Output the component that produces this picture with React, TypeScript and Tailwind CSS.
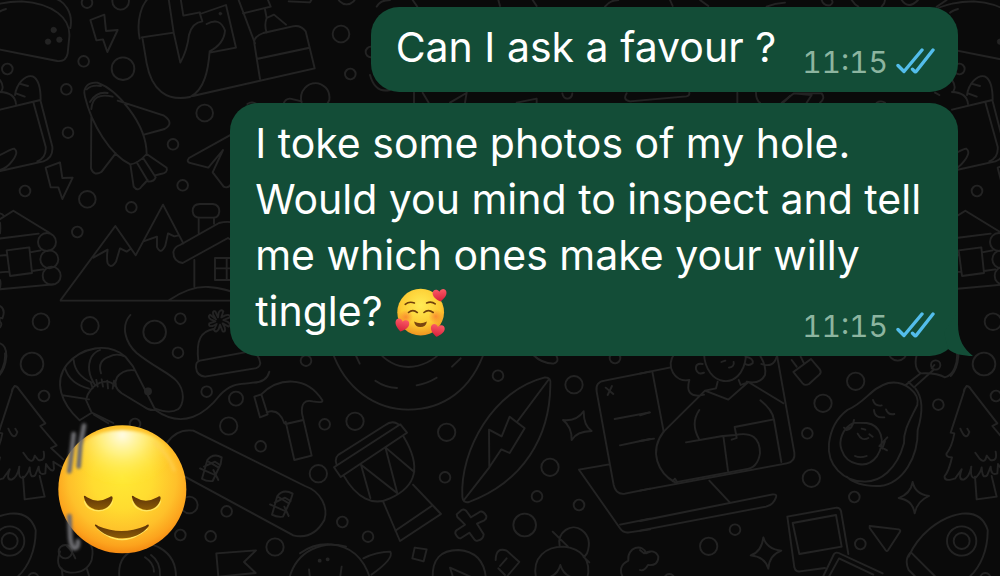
import type { ReactNode } from "react";

type Circle = [number, number, number];

const circles: Record<string, Circle[]> = {
  sky: [
    [261, 8, 16], [362, 4, 25], [22, 207, 16], [251, 184, 16], [369, 206, 34], [199, 268, 16],
    [204, 398, 16], [75, 573, 16], [262, 598, 25], [614, 339, 25], [519, 433, 16], [548, 556, 16],
    [1023, 102, 25], [1051, 222, 16], [1113, 156, 16], [1040, -15, 28],
  ],
  hills: [
    [394, 82, 16], [232, 156, 16], [123, 425, 25], [270, 437, 26], [464, 456, 34], [541, 416, 16],
    [534, 518, 16], [96, 552, 34], [141, 186, 27], [148, 238, 27], [155, 287, 27],
  ],
  forest: [
    [132, 138, 16], [620, 125, 16], [708, 146, 21], [686, 228, 26], [782, 289, 16], [974, 223, 16],
    [955, 371, 26], [680, 484, 16], [541, 555, 16], [632, 559, 16], [825, 591, 26], [568, 465, 25],
    [405, 222, 16], [918, 32, 16], [29, 573, 44], [29, 573, 24], [196, 605, 20], [100, 685, 16],
  ],
  music: [
    [165, 214, 26], [594, 77, 16], [440, 247, 26], [822, 104, 26], [435, 382, 16], [750, 352, 26],
    [711, 439, 16], [837, 465, 16], [127, 516, 16], [204, 560, 16], [674, 525, 34], [945, 24, 16],
  ],
  desk: [
    [647, 124, 26], [549, 190, 26], [502, 280, 16], [514, 415, 26], [643, 471, 16], [895, 194, 16],
    [285, 569, 16], [206, 619, 26], [661, 612, 16], [887, 75, 14], [773, 34, 28], [88, 718, 16],
  ],
};

function Dots({ set }: { set: string }) {
  return (
    <>
      {circles[set].map(([cx, cy, r], i) => (
        <circle key={i} cx={cx} cy={cy} r={r} />
      ))}
    </>
  );
}

function Doodles() {
  return (
    <g fill="none" stroke="#232323" strokeWidth="5.5" strokeLinecap="round" strokeLinejoin="round">
      <g transform="scale(.33333)">
        <Dots set="sky" />
        {/* taco */}
        <path d="M-120 130C-110 40 -30 5 65 4C160 10 212 55 208 110L203 160Q198 186 172 183L0 149L-120 130M160 -6C195 2 220 40 211 84M-6 38Q5 30 18 27" />
        <g fill="#232323" strokeWidth="2">
          <circle cx="161" cy="90" r="8" />
          <circle cx="144" cy="125" r="8" />
          <circle cx="178" cy="119" r="8" />
          <circle cx="661" cy="41" r="4" />
        </g>
        {/* bolts */}
        <path d="M271 60L313 44L318 93L353 90L322 156L309 118L289 121ZM137 503L180 487L187 534L218 533L187 597L175 562L152 562Z" />
        {/* shopping bag */}
        <path d="M0 329L121 300L157 440Q160 474 130 484L0 513M100 307L137 440Q140 472 112 484M45 285C50 250 76 224 98 229Q122 240 122 300M58 251L84 258M48 280L74 290M0 240Q13 258 5 272M0 276Q45 278 48 312M-20 469C5 470 25 447 43 446Q58 456 35 485Q20 505 0 510" />
        {/* rocket plane */}
        <path d="M255 290C246 260 268 246 292 248C350 268 440 370 440 462Q415 490 391 493C330 465 274 370 255 290M260 268Q275 253 303 258M274 327Q278 275 338 290M270 306Q289 274 323 279M353 302L490 346Q525 369 494 387L432 404M274 350L273 505Q282 530 305 515L347 460M391 493L401 560Q414 577 426 558L443 540M410 487L445 545Q462 545 467 532L430 475M440 462L500 503Q505 519 482 522L465 526" />
        {/* snake and easel */}
        <path d="M419 116C408 60 425 10 450 -10M427 112L440 190C455 270 500 305 570 291C615 270 625 205 629 154Q672 132 675 92Q660 50 620 72M425 112L521 98L505 -10M521 98L541 188Q562 150 567 105Q576 68 607 64L600 42L678 15L708 143L629 158M541 -10L550 47L600 37M578 288L944 205L917 94Q902 74 878 79L790 99Q760 110 763 130L780 237M714 -5L765 130M770 177L925 144M729 40L812 20L800 -10M795 28L800 54L822 44L858 74M800 54Q792 75 800 98M866 4L930 7L937 -5" />
        {/* paper plane */}
        <path d="M700 400L567 474Q556 487 575 490L625 503L669 450L638 517L671 560Q685 567 695 550" />
        {/* stool */}
        <path d="M905 310C895 270 925 246 955 250Q992 262 988 300L980 315M850 312Q858 290 880 298L905 304M742 312Q756 302 770 312" />
      </g>

      <g transform="translate(0 180) scale(.33333)">
        <Dots set="hills" />
        {/* log cabin */}
        <path d="M-110 188L40 92L148 158M-100 188L116 161M0 227L20 225M90 217L122 211M20 211L88 202L96 279L30 288ZM0 277L26 275M96 273L130 268M-100 337L160 313M-8 100Q5 98 12 108M0 128Q2 145 0 160M0 300Q4 315 -2 328" />
        {/* mountains */}
        <path d="M182 360L346 138L407 226L489 74L550 190M182 362L700 362M280 233L323 209Q319 235 323 250Q333 268 348 245L360 205L380 215L391 207M430 184L471 170V201Q482 226 496 197L504 160L523 169L536 166" />
        {/* cottage */}
        <path d="M583 240V320M700 184L684 174L548 249Q520 245 520 216Q523 201 540 195L657 129Q678 123 700 127M596 160V114M642 131V114M578 94Q578 72 600 72H638Q658 74 658 94Q656 114 638 113H600Q580 113 578 94M508 360Q570 318 625 321Q680 325 720 345M645 234H700M645 234V300H700M645 265H700M680 234V300" />
        {/* woolly hat */}
        <path d="M595 542C588 480 602 455 640 447M600 542L750 514Q775 515 781 550Q778 565 760 566L615 590Q590 587 588 562Q587 545 600 542" />
        <path d="M648 418L630 404Q622 410 632 418L646 424L628 430Q624 440 638 438L650 432L642 450Q648 460 656 448L660 434L668 454Q678 458 674 442L668 430L686 440Q694 434 684 426L670 420L690 412Q690 402 676 406L664 412L670 394Q662 386 656 398L654 412L646 394Q636 392 640 404Z" />
        {/* fishing line */}
        <path d="M391 405C360 440 378 490 410 519C460 560 510 580 530 603C558 635 550 675 534 688Q510 703 465 686M0 378Q18 388 7 415Q-4 410 0 425Q8 432 0 442M0 490Q20 497 19 530Q15 570 -4 588" />
      </g>

      <g transform="translate(0 350) scale(.33333)">
        <Dots set="forest" />
        {/* shrimp */}
        <path d="M239 211C183 160 160 95 201 43C245 -8 323 -25 376 20L399 49L466 180Q447 182 432 170L365 130Q337 110 351 82Q370 56 405 61M303 70Q291 32 328 20Q350 8 376 20M285 105Q255 60 275 20Q285 5 300 0M275 98Q225 75 221 30M267 116Q210 102 195 55M267 148L190 136M239 211L275 188L258 150Q265 115 300 98Q330 88 345 108M278 115L272 96M293 110L289 90M309 110L305 88M324 115L322 92M338 116L342 92M275 188L340 219M282 194L325 220M466 180C550 240 618 190 660 135C700 93 730 105 758 98Q800 97 808 65" />
        <circle cx="444" cy="124" r="9" fill="#232323" />
        {/* spruce */}
        <path d="M44 108Q36 116 35 128L-4 248L7 250Q0 290 -16 310Q-20 321 0 322Q-10 365 -22 378Q-25 397 10 385Q24 365 29 358Q17 390 35 389Q52 382 58 350Q53 390 72 382Q86 368 89 352Q91 390 106 375L116 350Q117 379 136 370L138 342Q157 372 162 356L160 335L190 354M44 108Q51 108 57 118L136 220L121 228L170 286L153 294L190 328M69 380L74 448L134 440L119 378M25 236Q42 276 52 246L46 236M70 308L82 325Q95 339 101 327L104 317L115 330Q137 335 131 305" />
        {/* hammer */}
        <path d="M763 140L784 133L803 193L780 202ZM784 133C835 82 920 76 967 151Q970 160 938 154Q902 146 906 190L935 317L883 330L857 215M857 222L910 210M853 220Q840 180 810 184L800 187" />
        {/* skateboard */}
        <path d="M500 280Q530 235 580 242L915 408C965 425 985 475 973 510Q940 570 880 556L555 380M606 386L622 330Q640 308 665 322L662 342L638 393Q620 395 606 386M600 355L645 375M612 350L645 335L660 345M622 333L655 352M640 360L655 390M816 494L832 438Q850 415 878 431L872 450L849 500Q830 502 816 494M810 463L855 483M824 458L855 443L872 453M834 440L866 460M853 470L866 498" />
        {/* rocket */}
        <path d="M-130 620C-105 560 -40 500 30 491Q90 485 107 540C108 600 85 650 55 678M-125 608Q-144 630 -130 660L-100 690M-120 610L-40 690" />
        {/* mitten, ring, flag, smile */}
        <path d="M180 604Q160 660 210 668Q260 670 275 630Q283 592 268 580M185 655L188 680M260 655L268 680M200 588Q215 600 226 625M358 684Q352 620 400 602M380 592C450 560 530 600 528 684M453 615Q482 635 480 678M435 622Q462 640 462 665M649 610L768 601L732 636L767 669L655 680ZM868 684C890 600 970 570 1038 590" />
      </g>

      <g transform="translate(300 350) scale(.33333)">
        <Dots set="music" />
        {/* record */}
        <path d="M95 0C135 120 230 178 325 179C430 178 515 120 555 0M230 0Q270 50 325 51Q385 49 430 0M160 0L179 41M226 92Q255 112 291 114M350 106Q382 100 410 83M456 50L482 25M700 15Q725 40 760 41Q785 34 760 5" />
        {/* drum */}
        <path d="M102 352L301 223L321 248L122 381ZM110 345Q100 320 125 308L255 226Q276 210 294 222M131 377C170 445 220 470 270 445C350 410 365 350 311 260M211 444L183 344L292 430L256 292L343 366M250 456L300 573L423 492L339 404M286 542L398 466" />
        {/* surfboard */}
        <path d="M487 440C480 300 580 120 735 82Q755 82 751 105C750 260 670 395 507 456Q488 460 487 440M492 450L568 352L567 239L605 259L629 200L674 235L629 309L604 298L568 352M651 216L745 90" />
        {/* stars, cross, diamond */}
        <path d="M789 210Q830 215 851 184Q851 228 875 243Q830 244 815 270Q816 231 789 210M470 493L485 480Q492 476 499 483L513 502L540 485Q550 482 559 498Q560 506 553 511L531 521L551 553Q550 568 533 572Q527 574 522 567L508 548L482 565Q473 566 466 551Q465 543 472 539L495 524L472 501ZM344 593L380 598L371 634L337 625Z" />
        {/* monster and badge */}
        <path d="M0 610Q40 580 92 583Q180 590 210 684M190 625Q230 605 271 605Q283 625 214 674M27 658L30 684M125 650L120 684M398 684Q395 600 475 600Q550 605 558 684M450 653L511 680M450 653L460 684M587 630Q588 590 620 602L658 636L617 684M600 648L620 625M595 655L615 675M708 684C695 620 740 590 790 590C845 595 875 630 862 684M758 545L804 590M779 588C770 545 815 518 845 540Q878 565 861 610L854 619M850 620L868 637M752 680Q775 670 781 645Q788 670 810 680M970 684Q950 650 985 632C980 590 1030 580 1038 610L1050 605" />
        <circle cx="59" cy="632" r="3" />
        <circle cx="83" cy="628" r="3" />
        {/* laptop screen */}
        <path d="M1050 65L914 92Q885 96 890 125L941 405Q948 435 975 431L1050 416M928 343L837 359L960 535Q970 550 987 547L1050 538M960 524L1050 506M944 207L1050 187M960 286L1050 267M917 113L940 132M936 108L923 135" />
      </g>

      <g transform="translate(640 340) scale(.33333)">
        <Dots set="desk" />
        <path d="M0 101L92 82M37 95L71 275M0 226L28 217M0 303L42 296M0 452L440 370Q467 365 463 338L410 40M0 543L398 463Q412 462 408 472Q400 495 378 500L0 572M208 422L270 488" />
        {/* person at the desk */}
        <path d="M104 40C75 80 105 128 148 120C138 155 150 174 192 164M192 40C195 140 305 158 318 50M188 72Q165 68 168 88Q173 106 192 98M316 50Q342 55 338 70Q325 80 314 70M233 125L228 145L195 152L71 275C25 335 55 400 105 427L315 388Q353 385 360 340Q360 270 285 285L250 288L264 393M195 152L265 179L325 126L430 190M296 120L302 135L325 126M361 48Q380 80 375 105Q360 134 320 125M364 72Q400 85 410 50M361 181Q398 210 402 240L424 366M178 210Q150 250 178 299M138 307L248 288M275 299L290 294L284 261L398 239M244 66L256 62M267 83Q284 80 281 66M98 424L105 416L112 427" />
        {/* tag */}
        <path d="M460 96L513 57L540 89Q545 97 538 104L507 132Q495 138 488 130ZM470 80L455 60M492 70L482 50" />
        {/* avocado */}
        <path d="M622 210C680 185 690 145 745 129C795 120 840 160 832 195C810 240 790 270 792 310C770 390 720 425 675 425C610 425 560 375 567 310Q575 245 622 210M826 145C855 180 845 230 833 270C835 350 790 430 720 438Q650 440 620 410M642 248C605 265 595 305 605 330C620 375 680 390 710 350C742 300 720 255 680 249ZM612 263L620 270Q638 266 642 240M618 266L628 262M742 292L718 318L741 331M735 303L727 326M699 180Q705 200 725 196M702 210Q703 235 733 232M738 208Q745 226 763 222M653 281Q665 305 685 294M665 266L676 269M688 283L698 290M645 348Q660 355 680 348" />
        {/* pan */}
        <path d="M830 45Q820 85 842 100L798 134M880 90L822 142M806 126L822 142M845 100Q890 98 914 112C942 105 953 70 951 40M875 85L883 75" />
        {/* photos */}
        <path d="M442 530L590 503Q600 503 603 513L625 642M442 530L463 682Q467 697 480 694L555 684M458 549L588 525L605 620L478 642ZM550 708L582 642Q587 636 596 639L728 700M568 708L597 655L700 704" />
        {/* stars and arrow */}
        <path d="M818 426Q825 462 867 468Q832 482 824 520Q818 480 776 474Q812 461 818 426M370 592Q380 628 424 632Q388 645 385 686Q375 650 332 646Q365 635 370 592M689 558L776 568Q784 571 779 577L744 631Q739 636 735 628L689 564ZM0 630L12 640Q45 625 55 650Q55 678 24 675Q12 695 0 690" />
      </g>

      <g transform="translate(370 0) scale(.33333)">
        <path d="M0 225Q15 280 60 270M132 278V308M158 278L176 308M290 278L285 308M240 308L288 280M440 308L500 296V308M577 280Q580 296 593 296Q606 294 607 280M770 280Q757 300 780 304L940 290Q960 290 958 278M1102 278V308M1158 278Q1158 300 1170 308M1240 308L1260 288M20 20Q30 0 60 0M128 0L142 20M385 0L390 18M488 0L500 18M705 20Q720 0 745 0M900 0L908 18M990 0L1015 18M1190 20Q1215 10 1245 8" />
      </g>
      <g transform="translate(780 0) scale(.33333)">
        <path d="M215 0Q225 15 235 20M315 0Q315 10 305 20M365 0Q385 30 414 0M125 0Q130 18 150 16Q162 8 155 0M470 20L500 0M5 308L42 280H125Q137 295 120 308M42 280L95 285L80 308M290 308Q303 300 315 308M465 278L478 285" />
      </g>
    </g>
  );
}

function Wallpaper() {
  return (
    <svg aria-hidden="true" className="absolute inset-0 h-full w-full">
      <defs>
        <g id="doodles">
          <Doodles />
        </g>
        <pattern id="wallpaper" width="952" height="640" patternUnits="userSpaceOnUse">
          <use href="#doodles" />
          <use href="#doodles" x="952" />
          <use href="#doodles" x="-952" />
        </pattern>
      </defs>
      <rect width="100%" height="100%" fill="url(#wallpaper)" />
    </svg>
  );
}

function ReadTicks() {
  return (
    <svg
      role="img"
      aria-label="Read"
      viewBox="0 0 40 28"
      className="h-7 w-10"
      fill="none"
      stroke="#53bdeb"
      strokeWidth="3.4"
      strokeLinecap="round"
      strokeLinejoin="round"
    >
      <path d="M2 18.5L8 24.5L26 3M16.5 22.3L19 24.7Q19.7 25 20.3 24.2L37 3" />
    </svg>
  );
}

function Heart({ x, y, turn }: { x: number; y: number; turn: number }) {
  return (
    <path
      transform={`translate(${x} ${y}) rotate(${turn})`}
      d="M0 20C-12 12 -22 3 -21 -8C-20 -19 -6 -21 0 -10C6 -21 20 -19 21 -8C22 3 12 12 0 20Z"
      fill="url(#heart)"
    />
  );
}

function LovedFace() {
  return (
    <svg
      role="img"
      aria-label="Smiling face with hearts"
      viewBox="48 46 164 154"
      className="-mt-3 -mb-2 inline-block h-[51px] w-[54px] align-middle"
    >
      <defs>
        <radialGradient id="loved" cx=".5" cy=".35" r=".65">
          <stop offset="0" stopColor="#ffec55" />
          <stop offset=".65" stopColor="#fdcb32" />
          <stop offset="1" stopColor="#ef9420" />
        </radialGradient>
        <radialGradient id="blush">
          <stop offset="0" stopColor="#f8642f" stopOpacity=".6" />
          <stop offset="1" stopColor="#f8642f" stopOpacity="0" />
        </radialGradient>
        <linearGradient id="heart" x2="0" y2="1">
          <stop offset="0" stopColor="#fb5964" />
          <stop offset="1" stopColor="#d61f3b" />
        </linearGradient>
      </defs>
      <circle cx="129" cy="122" r="71" fill="url(#loved)" />
      <circle cx="84" cy="137" r="22" fill="url(#blush)" />
      <circle cx="175" cy="135" r="22" fill="url(#blush)" />
      <g fill="none" stroke="#70400c" strokeWidth="5" strokeLinecap="round">
        <path d="M82 98Q94 88 110 94M147 94Q162 88 173 97" />
        <path d="M92 123Q105 111 119 123M139 123Q152 111 167 123" />
      </g>
      <path d="M109 150Q128 161 148 150Q145 167 128 167Q112 167 109 150" fill="#7a4510" />
      <Heart x={187} y={70} turn={-6} />
      <Heart x={72} y={161} turn={14} />
      <Heart x={180} y={177} turn={10} />
    </svg>
  );
}

function RelievedFace() {
  return (
    <svg role="img" aria-label="Relieved face" viewBox="0 0 480 480" className="h-40 w-40">
      <defs>
        <radialGradient id="skin" gradientUnits="userSpaceOnUse" cx="247" cy="205" r="225">
          <stop offset="0" stopColor="#ffe934" />
          <stop offset=".4" stopColor="#ffdc30" />
          <stop offset=".72" stopColor="#fec02a" />
          <stop offset=".9" stopColor="#fca31d" />
          <stop offset="1" stopColor="#f58a12" />
        </radialGradient>
        <radialGradient id="shine" gradientUnits="userSpaceOnUse" cx="247" cy="75" r="170" gradientTransform="translate(0 8) scale(1 .9)">
          <stop offset="0" stopColor="#fffce5" />
          <stop offset=".4" stopColor="#fff68f" stopOpacity=".8" />
          <stop offset="1" stopColor="#ffe934" stopOpacity="0" />
        </radialGradient>
        <linearGradient id="lid" x2="0" y2="1">
          <stop offset="0" stopColor="#5c3208" />
          <stop offset="1" stopColor="#8b5b06" />
        </linearGradient>
        <filter id="soft" x="-30%" y="-30%" width="160%" height="160%">
          <feGaussianBlur stdDeviation="4" />
        </filter>
      </defs>
      <circle cx="247" cy="238" r="192" fill="url(#skin)" />
      <ellipse cx="247" cy="160" rx="152" ry="100" fill="url(#shine)" filter="url(#soft)" />
      <path d="M345 100Q388 135 402 180" fill="none" stroke="#ffd25c" strokeOpacity=".6" strokeWidth="9" strokeLinecap="round" filter="url(#soft)" />
      <g fill="none" stroke="#ffe765" strokeWidth="4" strokeLinecap="round">
        <path d="M134 274C142 312 208 312 217 274M278 274C286 312 352 312 361 274M174 357Q245 420 321 357" />
      </g>
      <g fill="url(#lid)">
        <path d="M132 262C130 254 137 258 141 262Q173 282 208 262Q218 255 218 265C210 312 142 312 132 262Z" />
        <path d="M276 262C274 254 281 258 285 262Q317 282 352 262Q362 255 362 265C354 312 286 312 276 262Z" />
        <path d="M165 347C163 340 171 344 176 349Q245 378 316 348Q329 339 326 349C290 397 205 397 165 347Z" />
      </g>
      <g fill="none" stroke="#6c6c70" strokeWidth="14" strokeLinecap="round" filter="url(#soft)">
        <path d="M101 72L97 110L88 184M132 47L121 105L116 170M88 318L91 385Q95 418 106 414Q115 412 114 394" />
      </g>
    </svg>
  );
}

function Bubble({ children, tail = false }: { children: ReactNode; tail?: boolean }) {
  return (
    <article className="relative flex max-w-full rounded-[28px] bg-[#134d37] pt-3 pr-[22px] pb-[17px] pl-[25px]">
      <p className={tail ? "pr-4 text-[41px] leading-[56px] text-white" : "text-[41px] leading-[56px] text-white"}>
        {children}
      </p>
      <div
        className={
          tail
            ? "-ml-[135px] flex shrink-0 items-end gap-2 self-end"
            : "ml-[26px] flex shrink-0 items-end gap-2 self-end"
        }
      >
        <time className="text-[30px] leading-[26px] text-[#8db5a0] tabular-nums">11:15</time>
        <ReadTicks />
      </div>
      {tail && (
        <svg
          aria-hidden="true"
          viewBox="0 0 32 44"
          className="absolute -right-4 bottom-0 h-11 w-8"
          fill="#134d37"
        >
          <path d="M16 0V12C16 28 22 37 31 44C21 44 12 42 6 37L2 20Z" />
        </svg>
      )}
    </article>
  );
}

export default function App() {
  return (
    <main className="relative min-h-screen overflow-hidden bg-[#0a0a0a] font-['Inter','Liberation_Sans',sans-serif]">
      <Wallpaper />
      <div className="relative flex flex-col">
        <section className="flex flex-col items-end gap-[11px] pt-[7px] pr-[42px]">
          <Bubble>Can I ask a favour ?</Bubble>
          <Bubble tail>
            I toke some photos of my hole.
            <br />
            Would you mind to inspect and tell
            <br />
            me which ones make your willy
            <br />
            tingle? <LovedFace />
          </Bubble>
        </section>
        <section className="mt-[54px] ml-10">
          <RelievedFace />
        </section>
      </div>
    </main>
  );
}
